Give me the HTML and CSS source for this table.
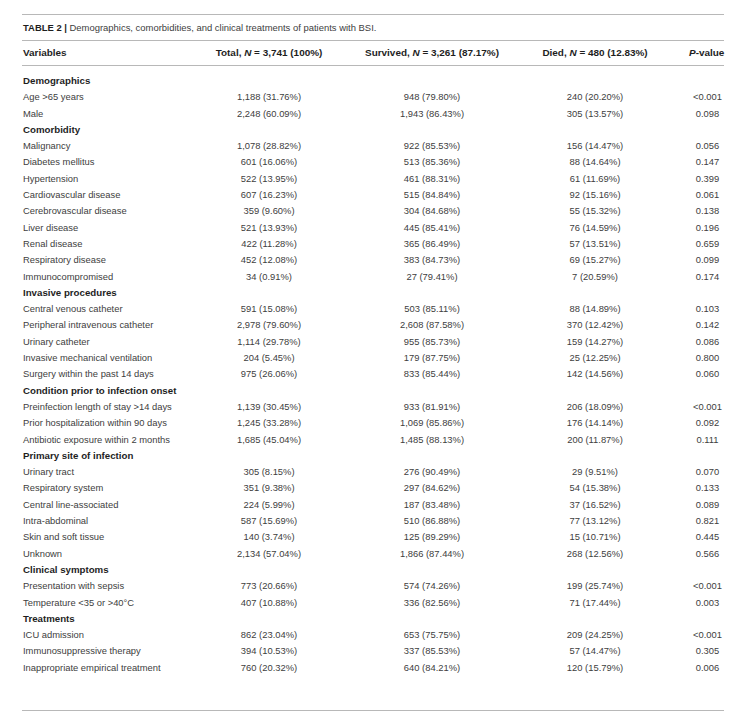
FILE: index.html
```html
<!DOCTYPE html>
<html lang="en">
<head>
<meta charset="utf-8">
<title>Table 2</title>
<link rel="stylesheet" href="styles.css">
</head>
<body>
<div class="wrap">
  <div class="caption"><b>TABLE 2 |</b> Demographics, comorbidities, and clinical treatments of patients with BSI.</div>
  <table class="tbl">
    <colgroup>
      <col class="c1"><col class="c2"><col class="c3"><col class="c4"><col class="c5">
    </colgroup>
    <thead>
      <tr>
        <th class="var">Variables</th>
        <th>Total, <i>N</i> = 3,741 (100%)</th>
        <th>Survived, <i>N</i> = 3,261 (87.17%)</th>
        <th>Died, <i>N</i> = 480 (12.83%)</th>
        <th class="pv"><i>P</i>-value</th>
      </tr>
    </thead>
    <tbody>
      <tr class="first"><td class="grp" colspan="5">Demographics</td></tr>
      <tr><td class="var">Age &gt;65 years</td><td>1,188 (31.76%)</td><td>948 (79.80%)</td><td>240 (20.20%)</td><td class="pv">&lt;0.001</td></tr>
      <tr><td class="var">Male</td><td>2,248 (60.09%)</td><td>1,943 (86.43%)</td><td>305 (13.57%)</td><td class="pv">0.098</td></tr>
      <tr><td class="grp" colspan="5">Comorbidity</td></tr>
      <tr><td class="var">Malignancy</td><td>1,078 (28.82%)</td><td>922 (85.53%)</td><td>156 (14.47%)</td><td class="pv">0.056</td></tr>
      <tr><td class="var">Diabetes mellitus</td><td>601 (16.06%)</td><td>513 (85.36%)</td><td>88 (14.64%)</td><td class="pv">0.147</td></tr>
      <tr><td class="var">Hypertension</td><td>522 (13.95%)</td><td>461 (88.31%)</td><td>61 (11.69%)</td><td class="pv">0.399</td></tr>
      <tr><td class="var">Cardiovascular disease</td><td>607 (16.23%)</td><td>515 (84.84%)</td><td>92 (15.16%)</td><td class="pv">0.061</td></tr>
      <tr><td class="var">Cerebrovascular disease</td><td>359 (9.60%)</td><td>304 (84.68%)</td><td>55 (15.32%)</td><td class="pv">0.138</td></tr>
      <tr><td class="var">Liver disease</td><td>521 (13.93%)</td><td>445 (85.41%)</td><td>76 (14.59%)</td><td class="pv">0.196</td></tr>
      <tr><td class="var">Renal disease</td><td>422 (11.28%)</td><td>365 (86.49%)</td><td>57 (13.51%)</td><td class="pv">0.659</td></tr>
      <tr><td class="var">Respiratory disease</td><td>452 (12.08%)</td><td>383 (84.73%)</td><td>69 (15.27%)</td><td class="pv">0.099</td></tr>
      <tr><td class="var">Immunocompromised</td><td>34 (0.91%)</td><td>27 (79.41%)</td><td>7 (20.59%)</td><td class="pv">0.174</td></tr>
      <tr><td class="grp" colspan="5">Invasive procedures</td></tr>
      <tr><td class="var">Central venous catheter</td><td>591 (15.08%)</td><td>503 (85.11%)</td><td>88 (14.89%)</td><td class="pv">0.103</td></tr>
      <tr><td class="var">Peripheral intravenous catheter</td><td>2,978 (79.60%)</td><td>2,608 (87.58%)</td><td>370 (12.42%)</td><td class="pv">0.142</td></tr>
      <tr><td class="var">Urinary catheter</td><td>1,114 (29.78%)</td><td>955 (85.73%)</td><td>159 (14.27%)</td><td class="pv">0.086</td></tr>
      <tr><td class="var">Invasive mechanical ventilation</td><td>204 (5.45%)</td><td>179 (87.75%)</td><td>25 (12.25%)</td><td class="pv">0.800</td></tr>
      <tr><td class="var">Surgery within the past 14 days</td><td>975 (26.06%)</td><td>833 (85.44%)</td><td>142 (14.56%)</td><td class="pv">0.060</td></tr>
      <tr><td class="grp" colspan="5">Condition prior to infection onset</td></tr>
      <tr><td class="var">Preinfection length of stay &gt;14 days</td><td>1,139 (30.45%)</td><td>933 (81.91%)</td><td>206 (18.09%)</td><td class="pv">&lt;0.001</td></tr>
      <tr><td class="var">Prior hospitalization within 90 days</td><td>1,245 (33.28%)</td><td>1,069 (85.86%)</td><td>176 (14.14%)</td><td class="pv">0.092</td></tr>
      <tr><td class="var">Antibiotic exposure within 2 months</td><td>1,685 (45.04%)</td><td>1,485 (88.13%)</td><td>200 (11.87%)</td><td class="pv">0.111</td></tr>
      <tr><td class="grp" colspan="5">Primary site of infection</td></tr>
      <tr><td class="var">Urinary tract</td><td>305 (8.15%)</td><td>276 (90.49%)</td><td>29 (9.51%)</td><td class="pv">0.070</td></tr>
      <tr><td class="var">Respiratory system</td><td>351 (9.38%)</td><td>297 (84.62%)</td><td>54 (15.38%)</td><td class="pv">0.133</td></tr>
      <tr><td class="var">Central line-associated</td><td>224 (5.99%)</td><td>187 (83.48%)</td><td>37 (16.52%)</td><td class="pv">0.089</td></tr>
      <tr><td class="var">Intra-abdominal</td><td>587 (15.69%)</td><td>510 (86.88%)</td><td>77 (13.12%)</td><td class="pv">0.821</td></tr>
      <tr><td class="var">Skin and soft tissue</td><td>140 (3.74%)</td><td>125 (89.29%)</td><td>15 (10.71%)</td><td class="pv">0.445</td></tr>
      <tr><td class="var">Unknown</td><td>2,134 (57.04%)</td><td>1,866 (87.44%)</td><td>268 (12.56%)</td><td class="pv">0.566</td></tr>
      <tr><td class="grp" colspan="5">Clinical symptoms</td></tr>
      <tr><td class="var">Presentation with sepsis</td><td>773 (20.66%)</td><td>574 (74.26%)</td><td>199 (25.74%)</td><td class="pv">&lt;0.001</td></tr>
      <tr><td class="var">Temperature &lt;35 or &gt;40°C</td><td>407 (10.88%)</td><td>336 (82.56%)</td><td>71 (17.44%)</td><td class="pv">0.003</td></tr>
      <tr><td class="grp" colspan="5">Treatments</td></tr>
      <tr><td class="var">ICU admission</td><td>862 (23.04%)</td><td>653 (75.75%)</td><td>209 (24.25%)</td><td class="pv">&lt;0.001</td></tr>
      <tr><td class="var">Immunosuppressive therapy</td><td>394 (10.53%)</td><td>337 (85.53%)</td><td>57 (14.47%)</td><td class="pv">0.305</td></tr>
      <tr class="last"><td class="var">Inappropriate empirical treatment</td><td>760 (20.32%)</td><td>640 (84.21%)</td><td>120 (15.79%)</td><td class="pv">0.006</td></tr>
    </tbody>
  </table>
  <div class="foot"></div>
</div>
</body>
</html>
```

FILE: styles.css
```css
html, body {
  margin: 0;
  padding: 0;
  background: #ffffff;
}

body {
  font-family: "Liberation Sans", Arial, Helvetica, sans-serif;
  color: #404040;
}

.wrap {
  width: 702px;
  margin-left: 22px;
  padding-top: 14px;
}

.caption {
  border-top: 1px solid #b8b8b8;
  border-bottom: 1px solid #b8b8b8;
  height: 25px;
  line-height: 25px;
  font-size: 9.45px;
  padding-left: 1px;
  white-space: nowrap;
}

.caption b {
  color: #1e1e1e;
  font-weight: bold;
}

.tbl {
  width: 702px;
  table-layout: fixed;
  border-collapse: collapse;
  border-spacing: 0;
  font-size: 9.4px;
}

.c1 { width: 164px; }
.c2 { width: 166px; }
.c3 { width: 160px; }
.c4 { width: 166px; }
.c5 { width: 46px; }

.tbl th,
.tbl td {
  padding: 0;
  text-align: center;
  white-space: nowrap;
  overflow: visible;
}

.tbl thead th {
  height: 24px;
  line-height: 24px;
  font-size: 9.95px;
  font-weight: bold;
  color: #1e1e1e;
  border-bottom: 1px solid #b8b8b8;
}

.tbl td {
  height: 16.3px;
  line-height: 16.3px;
}

.tbl .var {
  text-align: left;
  padding-left: 1px;
}

.tbl .pv {
  padding-left: 13px;
}

.tbl thead th.pv {
  padding-left: 11px;
}

.tbl .grp {
  text-align: left;
  padding-left: 1px;
  font-size: 9.7px;
  font-weight: bold;
  color: #1e1e1e;
}

.tbl tr.first td {
  padding-top: 7px;
}

.foot {
  height: 34px;
  border-bottom: 1px solid #b8b8b8;
}
```
